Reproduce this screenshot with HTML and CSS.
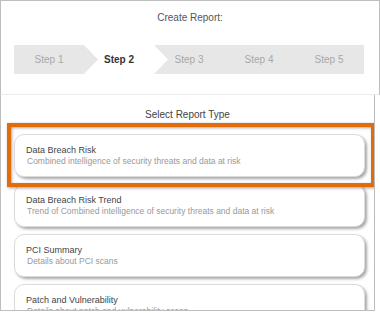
FILE: index.html
```html
<!DOCTYPE html>
<html lang="en">
  <head>
    <meta charset="UTF-8">
    <title>Create Report</title>
    <link rel="stylesheet" href="styles.css">
  </head>

  <body>
    <div class="report-header">
      <div class="header-title">Create Report:</div>
      <div class="steps">
        <div class="step">Step 1</div>
        <div class="step active"><span>Step 2</span></div>
        <div class="step">Step 3</div>
        <div class="step">Step 4</div>
        <div class="step">Step 5</div>
      </div>
    </div>

    <div class="report-list">
      <div class="list-title">Select Report Type</div>

      <div class="card">
        <div class="card-title">Data Breach Risk</div>
        <div class="card-desc">Combined intelligence of security threats and data at risk</div>
      </div>
      <div class="card">
        <div class="card-title">Data Breach Risk Trend</div>
        <div class="card-desc">Trend of Combined intelligence of security threats and data at risk</div>
      </div>
      <div class="card">
        <div class="card-title">PCI Summary</div>
        <div class="card-desc">Details about PCI scans</div>
      </div>
      <div class="card">
        <div class="card-title">Patch and Vulnerability</div>
        <div class="card-desc">Details about patch and vulnerability scans</div>
      </div>

      <!-- highlight annotation -->
      <div class="highlight"></div>
    </div>
  </body>
</html>
```

FILE: styles.css
```css
body {
  margin: 0;
  font-family: 'Liberation Sans', Arial, sans-serif;
  background-color: #fff;
  color: #444;
}

.report-header {
  width: 380px;
  box-sizing: border-box;
  border: 1px solid #bdbdbd;
  border-bottom: 1px solid #ececec;
  padding: 11px 0 20px 13px;
}

.header-title {
  font-size: 10px;
  line-height: 12px;
  color: #555;
  text-align: center;
  padding-right: 13px;
  margin-bottom: 21px;
}

.steps {
  display: flex;
  width: 350px;
  height: 29px;
  background-color: #e7e7e7;
}

.step {
  position: relative;
  width: 70px;
  display: flex;
  align-items: center;
  justify-content: center;
  font-size: 10px;
  color: #a8a8a8;
}

.step.active {
  color: #333;
  font-weight: bold;
}

.step.active::before {
  content: '';
  position: absolute;
  top: 0;
  bottom: 0;
  left: 0;
  right: -14px;
  background-color: #fff;
  clip-path: polygon(0 0, calc(100% - 14px) 0, 100% 50%, calc(100% - 14px) 100%, 0 100%, 14px 50%);
}

.step.active span {
  position: relative;
}

.report-list {
  position: relative;
  width: 375px;
  height: 216px;
  box-sizing: border-box;
  border: 1px solid #bdbdbd;
  border-top: none;
  padding-top: 13px;
  overflow: hidden;
}

.list-title {
  font-size: 10px;
  line-height: 14px;
  color: #444;
  text-align: center;
  margin-bottom: 12px;
}

.card {
  width: 351px;
  height: 43px;
  box-sizing: border-box;
  margin: 0 0 7px 13px;
  padding: 9px 0 0 11px;
  border: 1px solid #dcdcdc;
  border-radius: 10px;
  box-shadow: 2px 2px 3px rgba(0, 0, 0, 0.35);
  background-color: #fff;
}

.card-title {
  font-size: 9px;
  line-height: 12px;
  color: #444;
}

.card-desc {
  font-size: 8.5px;
  line-height: 11px;
  color: #999;
  padding-left: 1px;
}

.highlight {
  position: absolute;
  top: 28px;
  left: 6px;
  width: 368px;
  height: 64px;
  box-sizing: border-box;
  border: 4px solid #e36c0a;
  box-shadow: 1px 1px 3px rgba(0, 0, 0, 0.4), inset 1px 1px 3px rgba(0, 0, 0, 0.35);
}
```
